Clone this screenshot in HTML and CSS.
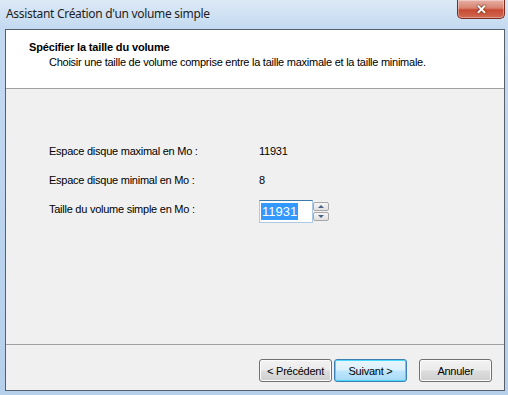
FILE: index.html
```html
<!DOCTYPE html>
<html>
<head>
<meta name="viewport" content="width=device-width, initial-scale=1">
<link rel="stylesheet" href="styles.css">
</head>
<body>

<div class="frame">
  <div class="titlebar">
    <span class="title">Assistant Création d'un volume simple</span>
    <button class="close">&#x2715;</button>
  </div>

  <div class="client">
    <div class="header">
      <div class="head-title">Spécifier la taille du volume</div>
      <div class="head-sub">Choisir une taille de volume comprise entre la taille maximale et la taille minimale.</div>
    </div>

    <div class="content">
      <div class="row">
        <span class="label">Espace disque maximal en Mo :</span>
        <span class="value">11931</span>
      </div>
      <div class="row">
        <span class="label">Espace disque minimal en Mo :</span>
        <span class="value">8</span>
      </div>
      <div class="row">
        <span class="label">Taille du volume simple en Mo :</span>
        <div class="spinner">
          <div class="spin-input"><span class="selected">11931</span></div>
          <div class="spin-btns">
            <div class="spin-btn"><span class="arrow-up"></span></div>
            <div class="spin-btn"><span class="arrow-down"></span></div>
          </div>
        </div>
      </div>
    </div>

    <div class="footer">
      <button class="btn">&lt; Précédent</button>
      <button class="btn btn-default">Suivant &gt;</button>
      <button class="btn btn-cancel">Annuler</button>
    </div>
  </div>
</div>

</body>
</html>
```

FILE: styles.css
```css
html, body {
  margin: 0;
  padding: 0;
}

body {
  width: 508px;
  height: 395px;
  overflow: hidden;
  font-family: "Liberation Sans", Arial, sans-serif;
  font-size: 11px;
  letter-spacing: -0.25px;
  color: #000;
}

.frame {
  box-sizing: border-box;
  width: 508px;
  height: 395px;
  padding: 0 3px 4px 5px;
  display: flex;
  flex-direction: column;
  background: linear-gradient(to bottom, #dce9f6 0px, #c4daf1 28px, #bcd4ee 200px, #b6d0ec 395px);
}

/* title bar */
.titlebar {
  height: 29px;
  display: flex;
  align-items: flex-start;
  justify-content: space-between;
}

.title {
  font-family: "Noto Sans", sans-serif;
  font-size: 12px;
  letter-spacing: -0.3px;
  color: #1e1e1e;
  margin: 5px 0 0 1px;
}

.close {
  width: 48px;
  height: 19px;
  margin: 0;
  padding: 0;
  border: 1px solid #7d2a22;
  border-top: none;
  border-radius: 0 0 5px 5px;
  background: linear-gradient(to bottom, #e6b1a6 0%, #d8826f 45%, #c84a33 55%, #cf6a4f 100%);
  box-shadow: inset 0 0 0 1px rgba(255,255,255,0.35);
  color: #fff;
  font-size: 13px;
  font-weight: bold;
  line-height: 17px;
  letter-spacing: 0;
  text-shadow: 0 0 2px #5a1a12, 0 0 1px #5a1a12;
}

/* client area */
.client {
  flex: 1;
  display: flex;
  flex-direction: column;
  border: 1px solid #56606c;
  background: #f0f0f0;
}

.header {
  box-sizing: border-box;
  height: 59px;
  background: #fff;
  border-bottom: 1px solid #a0a0a0;
  padding: 0 0 0 23px;
}

.head-title {
  font-weight: bold;
  letter-spacing: -0.15px;
  margin-top: 10px;
  line-height: 15px;
}

.head-sub {
  margin-left: 20px;
  line-height: 15px;
}

.content {
  flex: 1;
  padding: 55px 0 0 43px;
  display: flex;
  flex-direction: column;
  gap: 16px;
}

.row {
  display: flex;
  align-items: center;
  height: 13px;
}

.label {
  width: 210px;
}

.spinner {
  display: flex;
  align-items: flex-start;
  height: 23px;
  margin-top: 6px;
}

.spin-input {
  box-sizing: border-box;
  width: 54px;
  height: 23px;
  background: #fff;
  border: 1px solid #abc9e4;
  border-top-color: #3d7bad;
  padding: 2px 0 0 1px;
}

.selected {
  display: inline-block;
  background: #3399ff;
  color: #fff;
  font-size: 13px;
  letter-spacing: 0;
  line-height: 17px;
  padding: 0 1px;
}

.spin-btns {
  display: flex;
  flex-direction: column;
  gap: 1px;
  margin-top: 2px;
}

.spin-btn {
  box-sizing: border-box;
  width: 16px;
  height: 9px;
  border: 1px solid #a7a7a7;
  border-radius: 2px;
  background: linear-gradient(to bottom, #f6f6f6, #e1e1e1);
  display: flex;
  align-items: center;
  justify-content: center;
}

.arrow-up {
  border-left: 3px solid transparent;
  border-right: 3px solid transparent;
  border-bottom: 3px solid #4d6185;
}

.arrow-down {
  border-left: 3px solid transparent;
  border-right: 3px solid transparent;
  border-top: 3px solid #4d6185;
}

/* footer */
.footer {
  height: 46px;
  box-sizing: border-box;
  border-top: 1px solid #a0a0a0;
  padding: 14px 12px 0 0;
  display: flex;
  justify-content: flex-end;
  align-items: flex-start;
}

.btn {
  box-sizing: border-box;
  width: 73px;
  height: 23px;
  margin: 0 0 0 2px;
  padding: 0;
  font-family: "Liberation Sans", Arial, sans-serif;
  font-size: 11px;
  letter-spacing: -0.25px;
  color: #000;
  border: 1px solid #707070;
  border-radius: 3px;
  background: linear-gradient(to bottom, #f2f2f2 0%, #ebebeb 48%, #dddddd 52%, #cfcfcf 100%);
  box-shadow: inset 0 0 0 1px #fcfcfc;
}

.btn-default {
  border-color: #3c7fb1;
  background: linear-gradient(to bottom, #eaf6fd 0%, #d9f0fc 48%, #bee6fd 52%, #a7d9f5 100%);
  box-shadow: inset 0 0 0 1px #48d8fb;
}

.btn-cancel {
  margin-left: 12px;
}
```
